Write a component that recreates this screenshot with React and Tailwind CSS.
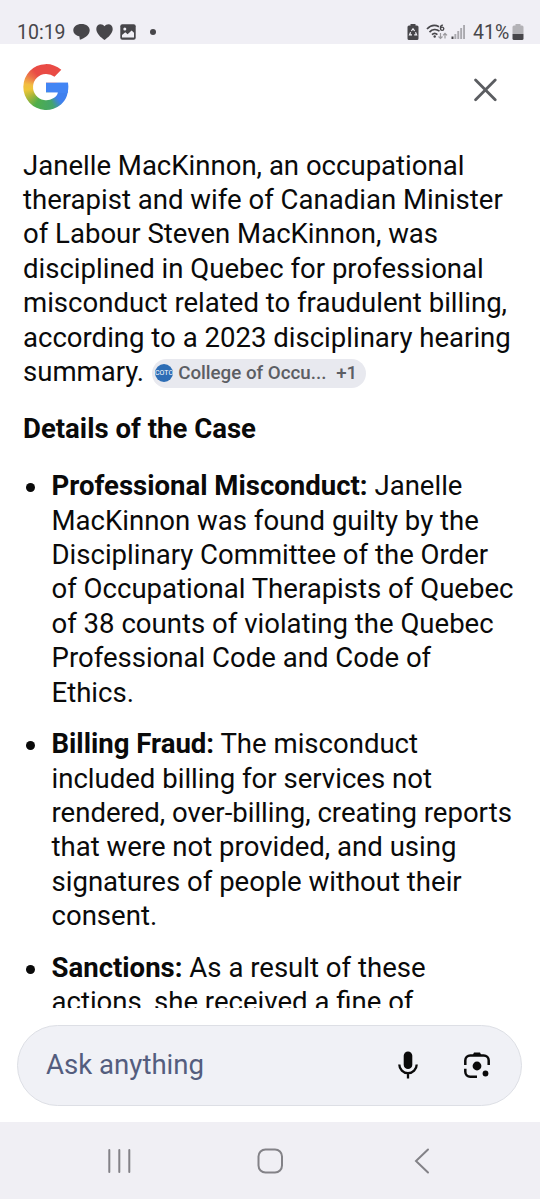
import { useState } from 'react'

const intro = [
  'Janelle MacKinnon, an occupational',
  'therapist and wife of Canadian Minister',
  'of Labour Steven MacKinnon, was',
  'disciplined in Quebec for professional',
  'misconduct related to fraudulent billing,',
  'according to a 2023 disciplinary hearing',
];

const details = [
  {
    title: 'Professional Misconduct:',
    lines: [
      'Janelle',
      'MacKinnon was found guilty by the',
      'Disciplinary Committee of the Order',
      'of Occupational Therapists of Quebec',
      'of 38 counts of violating the Quebec',
      'Professional Code and Code of',
      'Ethics.',
    ],
  },
  {
    title: 'Billing Fraud:',
    lines: [
      'The misconduct',
      'included billing for services not',
      'rendered, over-billing, creating reports',
      'that were not provided, and using',
      'signatures of people without their',
      'consent.',
    ],
  },
  {
    title: 'Sanctions:',
    lines: ['As a result of these', 'actions, she received a fine of'],
  },
];

const StatusBar = () => (
  <div className="flex h-11 shrink-0 items-end justify-between bg-[#f0eff5] pb-[3px] pl-[17px] pr-[16px] text-[#47464a]">
    <div className="flex items-center">
      <span className="-mb-0.5 w-12 whitespace-nowrap text-[19.5px] leading-5">10:19</span>
      <svg className="ml-2 h-4 w-[17px]" viewBox="0 0 17 16" fill="currentColor">
        <path d="M8.5 0C3.7 0 .3 2.7.3 6.2c0 3.1 2.500 5.300 6 6l.6 3.600c3.800-1.200 9.800-4.600 9.800-9.600C16.700 2.700 13.300 0 8.500 0Z" />
      </svg>
      <svg className="ml-1.5 h-4 w-[17px]" viewBox="0 0 17 16" fill="currentColor">
        <path d="M8.500 15.900C5 13.600.3 9.600.3 5 .3 2.100 2.200.2 4.600.2c1.600 0 3 .8 3.900 2.100C9.400 1 10.800.2 12.400.2c2.400 0 4.300 1.900 4.300 4.800 0 4.600-4.700 8.600-8.200 10.900Z" />
      </svg>
      <svg className="ml-[7px] h-4 w-4" viewBox="0 0 16 16">
        <rect x=".3" y=".3" width="15.4" height="15.4" rx="2" fill="currentColor" />
        <circle cx="4.800" cy="5" r="1.500" fill="#f0eff5" />
        <path d="M2 13.500V11l3.300-2.800 2.300 2 4-3.800 2.400 2.400v4.700Z" fill="#f0eff5" />
      </svg>
      <span className="ml-[14px] size-[6px] rounded-full bg-[#47464a]" />
    </div>
    <div className="flex items-center">
      <svg className="h-4 w-3" viewBox="0 0 12 16">
        <path d="M3.500 0h5v1.500H10a1.500 1.500 0 0 1 1.500 1.500v11.500A1.500 1.500 0 0 1 10 16H2a1.500 1.500 0 0 1-1.500-1.500V3A1.500 1.500 0 0 1 2 1.500h1.500Z" fill="currentColor" />
        <path d="M4.400 7 6 4.700 7.600 7M8.500 8.300l1.100 2.600H7.200M5 10.900H2.500L3.600 8.300" fill="none" stroke="#f0eff5" strokeWidth="1.200" />
      </svg>
      <svg className="ml-[7px] h-4 w-[22px]" viewBox="0 0 22 16" fill="none">
        <path d="M1 5C4.500 1.200 9 .5 13 2.700M3.500 8.100c2.800-3 6.800-3.300 10-1M6 10.700c1.500-1.500 3.800-1.500 5.400 0" stroke="currentColor" strokeWidth="1.700" />
        <circle cx="8.700" cy="12.500" r="1.200" fill="currentColor" />
        <path d="M17 1.300c-1.600-.4-2.600.8-2.600 2.600 0 1.600.7 2.400 1.700 2.400s1.700-.7 1.700-1.600-.7-1.500-1.600-1.500-1.700.6-1.700 1.500" stroke="currentColor" strokeWidth="1.300" />
        <path d="M14.500 9v5.500M12.500 12.500l2 2 2-2M19 14.500V9.300M17 11.300l2-2 2 2" stroke="#9a999d" strokeWidth="1.200" />
      </svg>
      <svg className="ml-[3px] h-4 w-[15px]" viewBox="0 0 15 16" fill="#aaa9ae">
        <rect x=".5" y="12.500" width="2" height="2.500" fill="currentColor" />
        <rect x="3.400" y="10" width="1.900" height="5" />
        <rect x="6.300" y="7" width="1.900" height="8" />
        <rect x="9.200" y="4" width="1.900" height="11" />
        <rect x="12.100" y="1" width="1.900" height="14" />
      </svg>
      <span className="-mb-0.5 ml-[7px] w-9 whitespace-nowrap text-[19.5px] leading-5">41%</span>
      <svg className="ml-[3px] h-4 w-3" viewBox="0 0 12 16">
        <path d="M3.500 0h5v1.500H10A1.500 1.500 0 0 1 11.500 3v7H.5V3A1.500 1.500 0 0 1 2 1.500h1.500Z" fill="#b3b2b6" />
        <path d="M.5 10h11v4.500A1.500 1.500 0 0 1 10 16H2a1.500 1.500 0 0 1-1.500-1.500Z" fill="currentColor" />
      </svg>
    </div>
  </div>
);

// the blue bar is a layer of its own over the colour wheel
const GoogleLogo = () => (
  <div className="h-[46px] w-[46px] [background:linear-gradient(#4285f4,#4285f4)_22px_18px/24px_11px_no-repeat,conic-gradient(#e94b45_0deg,#e94b45_65deg,#3f80ee_70deg,#3f80ee_135deg,#43a46c_160deg,#4fae4b_210deg,#a8b63a_238deg,#efc638_262deg,#f2bd42_278deg,#ec7049_305deg,#e94b45_325deg)] [clip-path:path('M38.3_5.8A22.9_22.9_0_1_0_38_40.5C43.5_35.7_46_29_45_18.8H23V28.2H35C34.4_31_32.6_33.2_30.2_34.3A13.2_13.2_0_1_1_31.5_12.8Z')]" />
);

const SourceChip = () => (
  <span className="ml-[8px] mt-[2px] inline-flex h-[29px] w-[214px] items-center whitespace-nowrap rounded-full bg-[#e8e9ef] pl-[3px] text-[18.75px] font-medium leading-none text-[#5c5e64]">
    <span className="flex size-[18px] shrink-0 items-center justify-center overflow-hidden rounded-full bg-[#2d6db5] text-[7px] font-normal text-white">
      COTO
    </span>
    <span className="ml-[5px] w-[150px]">College of Occu...</span>
    <span className="ml-[8px]">+1</span>
  </span>
);

const AskBar = () => {
  const [query, setQuery] = useState('');

  return (
    <div className="ml-[17px] mr-[18px] mt-[17px] flex h-[81px] shrink-0 items-center rounded-full border border-[#dddfe5] bg-[#f0f1f6] pl-[28px] pr-[30px]">
      <input
        type="text"
        value={query}
        onChange={(e) => setQuery(e.target.value)}
        placeholder="Ask anything"
        className="mb-[2px] min-w-0 flex-1 bg-transparent text-[27.6px] text-[#545d7e] outline-none placeholder:text-[#545d7e]"
      />
      <button type="button" className="mb-[2px] text-[#0a0a0a]">
        <svg className="h-[28px] w-[22px]" viewBox="0 0 22 28" fill="none">
          <rect x="6.700" y=".5" width="8.600" height="17.500" rx="4.300" fill="currentColor" />
          <path d="M2.300 13.500a8.700 8.700 0 0 0 17.400 0M11 22.500V27.500" stroke="currentColor" strokeWidth="2.300" />
        </svg>
      </button>
      <button type="button" className="mb-[2px] ml-[44px] text-[#0a0a0a]">
        <svg className="h-[28px] w-[28px]" viewBox="0 0 28 28" fill="none">
          <path d="M2.300 14V9.500a5 5 0 0 1 5-5h13.400a5 5 0 0 1 5 5V14M2.300 17.700v3.100a5 5 0 0 0 5 5H14" stroke="currentColor" strokeWidth="2.500" />
          <path d="M9.500 4.500 11 1.500h6l1.500 3Z" fill="currentColor" />
          <circle cx="14" cy="15" r="4.400" fill="currentColor" />
          <circle cx="22.500" cy="22.500" r="2.900" fill="currentColor" />
        </svg>
      </button>
    </div>
  );
};

const NavBar = () => (
  <div className="mt-4 flex h-[77px] shrink-0 items-center bg-[#f0eff4] pl-[107px] text-[#838287]">
    <svg className="h-[26px] w-6" viewBox="0 0 24 26" fill="none" stroke="currentColor" strokeWidth="2" strokeLinecap="round">
      <path d="M2.300 2v22M12.300 2v22M22.300 2v22" />
    </svg>
    <svg className="ml-[126px] h-[26px] w-[26px]" viewBox="0 0 26 26" fill="none" stroke="currentColor" strokeWidth="2">
      <rect x="1.500" y="1.500" width="23.500" height="23" rx="7" />
    </svg>
    <svg className="ml-[131px] h-[26px] w-4" viewBox="0 0 16 26" fill="none" stroke="currentColor" strokeWidth="2" strokeLinecap="round">
      <path d="M14 1.500 2 13l12 11.500" />
    </svg>
  </div>
);

export default function App() {
  return (
    <div className="flex h-[1199px] w-[540px] flex-col overflow-hidden bg-white font-['Roboto',sans-serif] text-[#0a0a0a]">
      <StatusBar />

      <div className="flex h-[104px] shrink-0 items-start justify-between pl-[23px] pr-[43px] pt-[20px]">
        <GoogleLogo />
        <button type="button" className="mt-[14px] text-[#5b5d61]">
          <svg className="h-6 w-6" viewBox="0 0 24 24" fill="none" stroke="currentColor" strokeWidth="2.800" strokeLinecap="round">
            <path d="M2.600 2.100l19.600 19.600M22.200 2.100l-19.600 19.600" />
          </svg>
        </button>
      </div>

      <div className="h-[860px] shrink-0 overflow-hidden whitespace-nowrap pl-[23px] pt-[0.5px] text-[27.55px] leading-[34.4px]">
        <p>
          {intro.map((line) => (
            <span key={line} className="block">{line}</span>
          ))}
          <span className="flex h-[34.4px] items-center">
            summary.
            <SourceChip />
          </span>
        </p>

        <h3 className="mt-[23px] font-bold">Details of the Case</h3>

        <ul className="mt-[22.5px] space-y-[17.2px]">
          {details.map((item) => (
            <li key={item.title} className="flex">
              <span className="ml-[3px] mr-[16.5px] mt-[14px] size-[9px] shrink-0 rounded-full bg-[#0a0a0a]" />
              <p>
                <strong className="font-bold">{item.title}</strong>{' '}
                {item.lines.map((line, i) => (
                  <span key={line} className={i === 0 ? '' : 'block'}>{line}</span>
                ))}
              </p>
            </li>
          ))}
        </ul>
      </div>

      <AskBar />
      <NavBar />
    </div>
  );
}
